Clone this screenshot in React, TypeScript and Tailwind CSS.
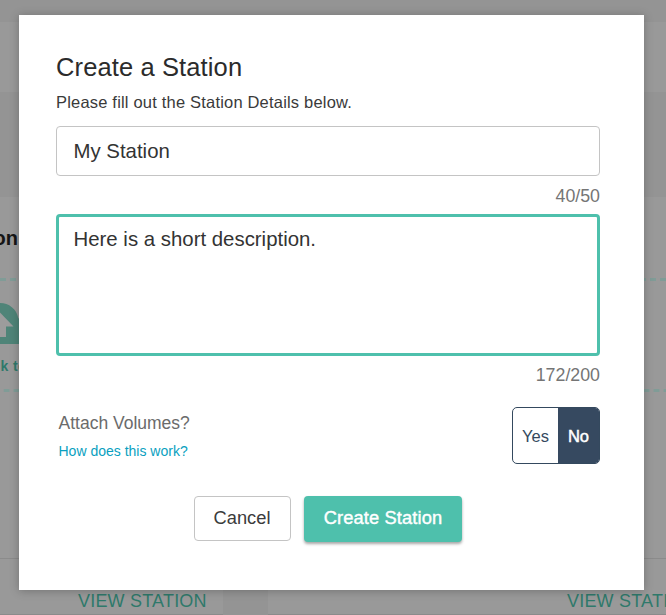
function StationFooter({ className }: { className: string }) {
  return (
    <div className={`h-[57px] border-y border-[#8b8b8b] pt-[32px] text-[18px] leading-[20px] tracking-[0.2px] text-[#2f796b] ${className}`}>
      VIEW STATION
    </div>
  );
}

function Dashes({ className }: { className: string }) {
  return (
    <svg className={`block h-[3px] w-full shrink-0 ${className}`} viewBox="0 0 666 3" preserveAspectRatio="none">
      <line x1="0" y1="1.5" x2="666" y2="1.5" stroke="currentColor" strokeWidth="3" strokeDasharray="6 4" />
    </svg>
  );
}

function Backdrop() {
  return (
    <div className="flex h-full flex-col bg-[#999999]">
      <div className="h-[22px] shrink-0 bg-[#949494]" />
      <div className="h-[70px] shrink-0" />
      <div className="h-[105px] shrink-0 bg-[#949494]" />
      <div className="h-[81px] shrink-0 pt-[28px]">
        <div className="flex w-[18px] justify-end text-[20px] font-bold leading-[26px] text-[#151515]">Station</div>
      </div>
      <Dashes className="text-[#809c97]" />
      <div className="h-[108px] shrink-0 pt-[22px]">
        <svg width="20" height="42" viewBox="0 0 20 42" fill="none">
          <path d="M0 0C9 0 16.5 6 18.3 15L20 17V41H0Z" fill="#4f8478" />
          <path d="M0 9.5L13.5 23.5H6V34H0Z" fill="#9c9c9c" />
        </svg>
        <div className="flex w-[27px] justify-end whitespace-nowrap pt-[11px] text-[14px] font-bold leading-[20px] tracking-[0.4px] text-[#2f796b]">
          Click to
        </div>
      </div>
      <Dashes className="translate-x-[3.5px] text-[#809c97]" />
      <div className="h-[166px] shrink-0" />
      <div className="flex shrink-0">
        <StationFooter className="w-[223px] pl-[78px]" />
        <div className="w-[45px] bg-[#949494]" />
        <StationFooter className="w-[398px] overflow-hidden whitespace-nowrap pl-[299px]" />
      </div>
    </div>
  );
}

export default function App() {
  return (
    <div className="relative h-[615px] w-[666px] overflow-hidden font-['Liberation_Sans',Arial,sans-serif]">
      <Backdrop />
      <div className="absolute inset-0 flex justify-center pr-[3px] pt-[15px]">
        <div className="flex h-[575px] w-[625px] flex-col bg-white pl-[37px] pr-[44px] pt-[37px] shadow-[0_1px_9px_rgba(0,0,0,0.25)]">
          <h1 className="text-[25.5px] leading-[30px] tracking-[0.12px] text-[#2b2b2b]">Create a Station</h1>
          <p className="mt-[10px] text-[16.5px] leading-[20px] tracking-[0.19px] text-[#3a3a3a]">
            Please fill out the Station Details below.
          </p>
          <div className="mt-[14px] flex h-[50px] shrink-0 items-center rounded-[4px] border border-[#c4c4c4] pl-[16.5px] text-[20.4px] text-[#333333]">
            My Station
          </div>
          <div className="mt-[10px] text-right text-[17.8px] leading-[20px] text-[#757575]">40/50</div>
          <div className="mt-[8px] h-[142px] shrink-0 rounded-[4px] border-[3px] border-[#4ec0ac] pl-[14.5px] pt-[10px] text-[20.4px] leading-[24px] text-[#333333]">
            Here is a short description.
          </div>
          <div className="mt-[9px] text-right text-[17.8px] leading-[20px] text-[#757575]">172/200</div>
          <div className="mt-[22px] flex h-[57px] shrink-0 justify-between">
            <div className="pl-[2.5px] pt-[6px]">
              <div className="text-[17.5px] leading-[20px] text-[#6b6b6b]">Attach Volumes?</div>
              <div className="mt-[9px] text-[14px] leading-[18px] text-[#0a9fc0]">How does this work?</div>
            </div>
            <div className="flex w-[88px] overflow-hidden rounded-[5px] border border-[#34495e] text-[16.5px]">
              <div className="flex w-[45px] items-center justify-center pt-[2px] text-[#34495e]">Yes</div>
              <div className="flex flex-1 items-center justify-center bg-[#364960] pt-[2px] text-white [-webkit-text-stroke:0.5px_white]">No</div>
            </div>
          </div>
          <div className="mt-[32px] flex gap-[13px] pl-[138px] text-[18.3px]">
            <button className="h-[45px] w-[97px] rounded-[4px] border border-[#c4c4c4] pb-[2px] pr-[1px] text-[#3b3b3b]">Cancel</button>
            <button className="h-[46px] w-[158px] rounded-[4px] bg-[#4ec0ac] pb-[3px] tracking-[0.12px] text-white shadow-[0_2px_3px_rgba(0,0,0,0.35)] [-webkit-text-stroke:0.4px_white]">
              Create Station
            </button>
          </div>
        </div>
      </div>
    </div>
  );
}
